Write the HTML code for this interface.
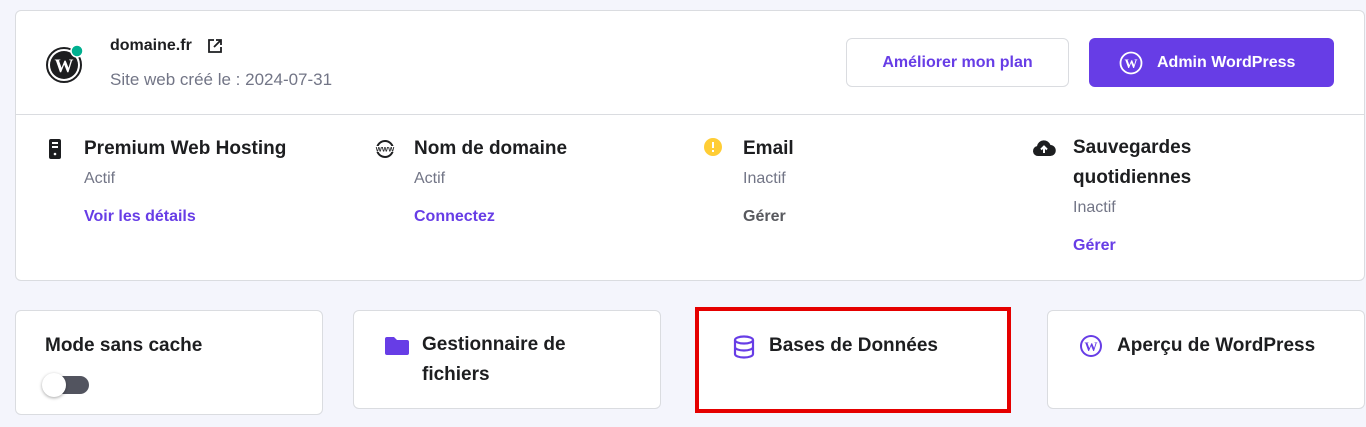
<!DOCTYPE html><html><head><style>
body{margin:0;width:1366px;height:427px;background:#f4f5fc;font-family:"Liberation Sans",sans-serif;color:#1d1e20;position:relative;overflow:hidden}
.a{position:absolute}
.card{position:absolute;background:#fff;border:1px solid #dadce0;border-radius:6px;box-sizing:border-box}
.t{font-size:19px;font-weight:bold;color:#1d1e20}
.g{font-size:16px;color:#727586}
.l{font-size:16px;font-weight:bold;color:#673de6}
</style></head><body>
<div class="card" style="left:15px;top:10px;width:1350px;height:271px"></div>
<div class="a" style="left:15px;top:114px;width:1350px;height:1px;background:#dadce0"></div>
<svg class="a" style="left:45px;top:45px" width="40" height="40" viewBox="0 0 40 40"><circle cx="19" cy="20" r="17" fill="#fff" stroke="#1d1e20" stroke-width="2"/><circle cx="19" cy="20" r="14" fill="#1d1e20"/><text x="19" y="27" font-size="19" font-weight="bold" fill="#fff" text-anchor="middle" font-family="Liberation Serif">W</text><circle cx="32" cy="6" r="6" fill="#00b090" stroke="#fff" stroke-width="1.5"/></svg>
<div class="a" style="left:110px;top:37px;font-size:16px;font-weight:bold">domaine.fr</div>
<svg class="a" style="left:207px;top:38px" width="16" height="16" viewBox="0 0 16 16" fill="none" stroke="#1d1e20" stroke-width="1.8"><path d="M7 2H2v12h12V9M9 2h5v5M14 2L7 9"/></svg>
<div class="a g" style="left:110px;top:70px;font-size:17px">Site web créé le : 2024-07-31</div>
<div class="a" style="left:846px;top:38px;width:223px;height:49px;border:1px solid #dadce0;border-radius:6px;box-sizing:border-box;background:#fff;color:#673de6;font-weight:bold;font-size:16px;text-align:center;line-height:47px">Améliorer mon plan</div>
<div class="a" style="left:1089px;top:38px;width:245px;height:49px;border-radius:6px;background:#673de6;color:#fff;font-weight:bold;font-size:16px;line-height:49px"><svg style="position:absolute;left:30px;top:13px" width="24" height="24" viewBox="0 0 24 24"><circle cx="12" cy="12" r="10.5" fill="none" stroke="#fff" stroke-width="1.8"/><text x="12" y="17" font-size="13" font-weight="bold" fill="#fff" text-anchor="middle" font-family="Liberation Serif">W</text></svg><span style="position:absolute;left:68px">Admin WordPress</span></div>

<svg class="a" style="left:48px;top:138px" width="14" height="22" viewBox="0 0 14 22"><rect x="1" y="1" width="12" height="20" rx="2" fill="#1d1e20"/><rect x="4" y="4" width="6" height="2" fill="#fff"/><rect x="4" y="8" width="6" height="2" fill="#fff"/><circle cx="7" cy="16" r="1.3" fill="#fff"/></svg>
<div class="a t" style="left:84px;top:138px">Premium Web Hosting</div>
<div class="a g" style="left:84px;top:170px">Actif</div>
<div class="a l" style="left:84px;top:208px">Voir les détails</div>

<svg class="a" style="left:374px;top:139px" width="22" height="20" viewBox="0 0 22 20"><circle cx="11" cy="10" r="8" fill="none" stroke="#1d1e20" stroke-width="2"/><rect x="0" y="7" width="22" height="6" fill="#fff"/><text x="11" y="12.5" font-size="6.5" font-weight="bold" text-anchor="middle" fill="#1d1e20">WWW</text></svg>
<div class="a t" style="left:414px;top:138px">Nom de domaine</div>
<div class="a g" style="left:414px;top:170px">Actif</div>
<div class="a l" style="left:414px;top:208px">Connectez</div>

<svg class="a" style="left:703px;top:137px" width="20" height="20"><circle cx="10" cy="10" r="9" fill="#ffcd35"/><rect x="9" y="5" width="2" height="6" fill="#fff"/><rect x="9" y="13" width="2" height="2" fill="#fff"/></svg>
<div class="a t" style="left:743px;top:138px">Email</div>
<div class="a g" style="left:743px;top:170px">Inactif</div>
<div class="a" style="left:743px;top:208px;font-size:16px;font-weight:bold;color:#58595e">Gérer</div>

<svg class="a" style="left:1032px;top:139px" width="24" height="18" viewBox="0 0 24 18"><path d="M6 17a5 5 0 0 1-1-9.9A7 7 0 0 1 18.5 6 5.5 5.5 0 0 1 18 17z" fill="#1d1e20"/><path d="M12 14V8M9 10.5l3-3 3 3" stroke="#fff" stroke-width="2" fill="none"/></svg>
<div class="a t" style="left:1073px;top:133px;line-height:30px">Sauvegardes<br>quotidiennes</div>
<div class="a g" style="left:1073px;top:199px">Inactif</div>
<div class="a l" style="left:1073px;top:237px">Gérer</div>

<div class="card" style="left:15px;top:310px;width:308px;height:105px"></div>
<div class="a t" style="left:45px;top:335px">Mode sans cache</div>
<div class="a" style="left:45px;top:376px;width:44px;height:18px;border-radius:9px;background:#52545f"></div>
<div class="a" style="left:42px;top:373px;width:24px;height:24px;border-radius:50%;background:#fff;box-shadow:0 1px 3px rgba(0,0,0,.35)"></div>

<div class="card" style="left:353px;top:310px;width:308px;height:99px"></div>
<svg class="a" style="left:384px;top:336px" width="26" height="20" viewBox="0 0 26 20"><path d="M1 3a2 2 0 0 1 2-2h7l3 3h10a2 2 0 0 1 2 2v11a2 2 0 0 1-2 2H3a2 2 0 0 1-2-2z" fill="#673de6"/></svg>
<div class="a t" style="left:422px;top:330px;line-height:30px">Gestionnaire de<br>fichiers</div>

<div class="a" style="left:695px;top:307px;width:316px;height:106px;border:4px solid #e50000;box-sizing:border-box;background:#fff"></div>
<svg class="a" style="left:733px;top:335px" width="22" height="24" viewBox="0 0 22 24" fill="none" stroke="#673de6" stroke-width="2.2"><ellipse cx="11" cy="5" rx="9" ry="3.5"/><path d="M2 5v14c0 2 4 3.5 9 3.5s9-1.5 9-3.5V5M2 12c0 2 4 3.5 9 3.5s9-1.5 9-3.5"/></svg>
<div class="a t" style="left:769px;top:335px">Bases de Données</div>

<div class="card" style="left:1047px;top:310px;width:318px;height:99px"></div>
<svg class="a" style="left:1079px;top:334px" width="24" height="24" viewBox="0 0 24 24"><circle cx="12" cy="12" r="11" fill="#673de6"/><circle cx="12" cy="12" r="9" fill="#fff"/><text x="12" y="17" font-size="13" font-weight="bold" fill="#673de6" text-anchor="middle" font-family="Liberation Serif">W</text></svg>
<div class="a t" style="left:1117px;top:335px">Aperçu de WordPress</div>
</body></html>
